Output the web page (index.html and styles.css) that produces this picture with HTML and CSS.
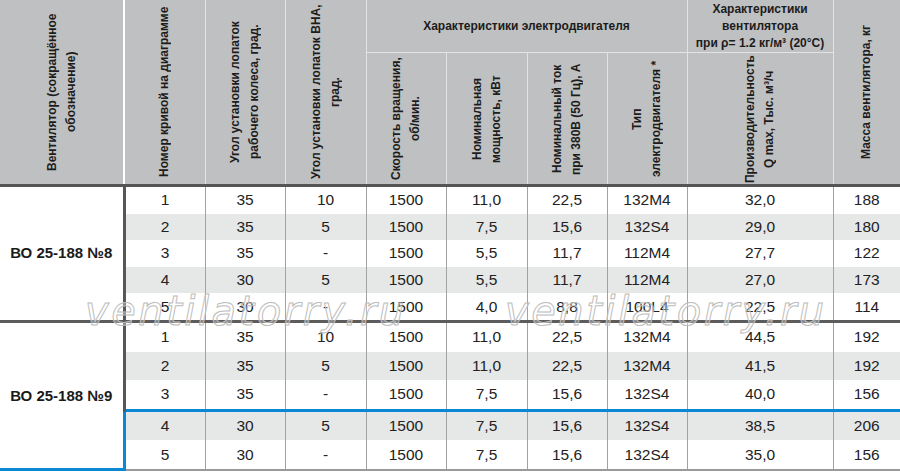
FILE: index.html
```html
<!DOCTYPE html>
<html lang="ru">
<head>
<meta charset="utf-8">
<title>ВО 25-188</title>
<link rel="stylesheet" href="styles.css">
</head>
<body>
<div class="wrap">
<table class="spec">
<colgroup>
<col class="w124"><col class="w81"><col class="w80"><col class="w81"><col class="w80"><col class="w81"><col class="w80"><col class="w80"><col class="w146"><col class="w67">
</colgroup>
<thead>
<tr class="h1">
<th rowspan="2" class="c1"><div class="vt tall">Вентилятор (сокращённое<br>обозначение)</div></th>
<th rowspan="2"><div class="vt tall">Номер кривой на диаграмме</div></th>
<th rowspan="2"><div class="vt tall">Угол установки лопаток<br>рабочего колеса, град.</div></th>
<th rowspan="2"><div class="vt tall">Угол установки лопаток ВНА,<br>град.</div></th>
<th colspan="4" class="grp">Характеристики электродвигателя</th>
<th class="grp grp2">Характеристики<br>вентилятора<br>при ρ= 1.2 кг/м³ (20°C)</th>
<th rowspan="2" class="last"><div class="vt tall">Масса вентилятора, кг</div></th>
</tr>
<tr class="h2">
<th><div class="vt short">Скорость вращения,<br>об/мин.</div></th>
<th><div class="vt short">Номинальная<br>мощность, кВт</div></th>
<th><div class="vt short">Номинальный ток<br>при 380В (50 Гц), А</div></th>
<th><div class="vt short">Тип<br>электродвигателя *</div></th>
<th><div class="vt short">Производительность<br>Q max, Тыс. м³/ч</div></th>
</tr>
</thead>
<tbody class="g1">
<tr class="first"><td rowspan="5" class="name">ВО 25-188 №8</td><td class="c2">1</td><td>35</td><td>10</td><td>1500</td><td>11,0</td><td>22,5</td><td>132M4</td><td>32,0</td><td class="last">188</td></tr>
<tr class="alt"><td class="c2">2</td><td>35</td><td>5</td><td>1500</td><td>7,5</td><td>15,6</td><td>132S4</td><td>29,0</td><td class="last">180</td></tr>
<tr><td class="c2">3</td><td>35</td><td>-</td><td>1500</td><td>5,5</td><td>11,7</td><td>112M4</td><td>27,7</td><td class="last">122</td></tr>
<tr class="alt"><td class="c2">4</td><td>30</td><td>5</td><td>1500</td><td>5,5</td><td>11,7</td><td>112M4</td><td>27,0</td><td class="last">173</td></tr>
<tr><td class="c2">5</td><td>30</td><td>-</td><td>1500</td><td>4,0</td><td>8,8</td><td>100L4</td><td>22,5</td><td class="last">114</td></tr>
</tbody>
<tbody class="g2">
<tr class="first"><td rowspan="5" class="name name2">ВО 25-188 №9</td><td class="c2">1</td><td>35</td><td>10</td><td>1500</td><td>11,0</td><td>22,5</td><td>132M4</td><td>44,5</td><td class="last">192</td></tr>
<tr class="alt"><td class="c2">2</td><td>35</td><td>5</td><td>1500</td><td>11,0</td><td>22,5</td><td>132M4</td><td>41,5</td><td class="last">192</td></tr>
<tr><td class="c2">3</td><td>35</td><td>-</td><td>1500</td><td>7,5</td><td>15,6</td><td>132S4</td><td>40,0</td><td class="last">156</td></tr>
<tr class="alt hl hl-top"><td class="c2">4</td><td>30</td><td>5</td><td>1500</td><td>7,5</td><td>15,6</td><td>132S4</td><td>38,5</td><td class="last">206</td></tr>
<tr class="hl end"><td class="c2">5</td><td>30</td><td>-</td><td>1500</td><td>7,5</td><td>15,6</td><td>132S4</td><td>35,0</td><td class="last">156</td></tr>
</tbody>
</table>
<span class="wm wm-a">ventilatorry.ru</span>
<span class="wm wm-b">ventilatorry.ru</span>
</div>
</body>
</html>
```
FILE: styles.css
```css
html, body {
  margin: 0;
  padding: 0;
  background: #ffffff;
}

.wrap {
  position: relative;
  width: 900px;
  height: 474px;
  overflow: hidden;
}

.spec {
  width: 900px;
  border-collapse: collapse;
  table-layout: fixed;
  font-family: "Liberation Sans", Arial, sans-serif;
  color: #222222;
}

.w124 { width: 124px; }
.w81 { width: 81px; }
.w80 { width: 80px; }
.w146 { width: 146px; }
.w67 { width: 67px; }

/* header */
.spec th {
  background: #bfc0c1;
  border: 1px solid #e3e3e3;
  padding: 0;
  font-weight: bold;
  font-size: 12px;
  color: #1c1c1c;
  text-align: center;
  vertical-align: middle;
  line-height: 14px;
  border-bottom: 3px solid #555555;
}

.spec .h1 th { border-top: none; }
.spec th.c1 { border-left: none; border-right: 2px solid #ffffff; }
.spec th.last { border-right: none; }

.spec .h1 th.grp {
  height: 52px;
  border-bottom: 1px solid #e3e3e3;
  line-height: 17px;
}

.spec .h2 th { height: 131px; }

.vt {
  writing-mode: vertical-rl;
  transform: rotate(180deg);
  display: inline-block;
  vertical-align: top;
  text-align: center;
  line-height: 19px;
  white-space: nowrap;
}

.vt.tall { height: 180px; }
.vt.short { height: 128px; }

/* body */
.spec td {
  padding: 0;
  text-align: center;
  vertical-align: middle;
  font-size: 15.5px;
  line-height: 18px;
  border-left: 1px solid #a2a2a2;
  border-right: 1px solid #a2a2a2;
  background: #ffffff;
}

.spec tr.alt td { background: #e6e7e7; }

.spec td.name {
  border-left: none;
  border-right: none;
  font-weight: bold;
  font-size: 15px;
  color: #1a1a1a;
}

.spec td.c2 { border-left: 3px solid #575757; }
.spec td.last { border-right: none; }

.g1 td { height: 26.6px; }
.g2 td { height: 28.6px; }

.g1 tr.first td { border-top: 3px solid #555555; }
.g2 tr.first td { border-top: 3px solid #5c5c5c; }

.g2 tr.hl-top td { border-top: 3px solid #0a88d6; }
.g2 tr.hl td.c2 { border-left: 3px solid #0a88d6; }
.g2 tr.end td { border-bottom: 2px solid #9a9a9a; }
.g2 tr.first td.name2 { border-bottom: 3px solid #0a88d6; }

/* watermark over the table */
.wm {
  position: absolute;
  top: 291px;
  font-family: "DejaVu Sans", sans-serif;
  font-style: oblique;
  font-size: 40px;
  line-height: 40px;
  letter-spacing: 2.5px;
  color: rgba(255, 255, 255, 0.3);
  -webkit-text-stroke: 1px #bdbdbd;
  white-space: nowrap;
  pointer-events: none;
}

.wm-a { left: 85px; }
.wm-b { left: 505px; }
```
